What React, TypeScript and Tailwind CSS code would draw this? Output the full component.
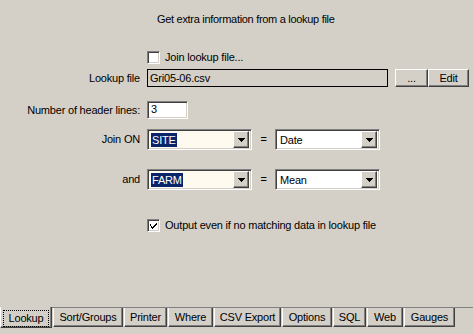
import React from "react"

const font = { fontFamily: '"Liberation Sans", Arial, sans-serif' }

const sunken =
    "border border-t-[#808080] border-l-[#808080] border-b-white border-r-white shadow-[inset_1px_1px_0_#404040,inset_-1px_-1px_0_#d4d0c8]"
const raised =
    "border border-t-white border-l-white border-b-[#404040] border-r-[#404040] shadow-[inset_-1px_-1px_0_#808080]"

const CheckBox = ({ checked }: { checked?: boolean }) => (
    <div className={`w-[13px] h-[13px] bg-white flex items-center justify-center ${sunken}`}>
        {checked && (
            <svg width="7" height="7" viewBox="0 0 7 7" shapeRendering="crispEdges">
                <path d="M0 2h1v3h1v1h1v-1h1v-1h1v-1h1v-1h1v-1h-1v1h-1v1h-1v1h-1v1h-1v-1h-1v-1h-1z" fill="#000" />
                <path d="M0 3h1v3h1v1h1v-1h1v-1h1v-1h1v-1h1v-1h-1v1h-1v1h-1v1h-1v1h-1v-1h-1v-1h-1z" fill="#000" />
            </svg>
        )}
    </div>
)

const DropArrow = () => (
    <div className={`w-[16px] h-[17px] bg-[#d4d0c8] flex items-center justify-center ${raised}`}>
        <svg width="7" height="4" viewBox="0 0 7 4" shapeRendering="crispEdges">
            <path d="M0 0h7v1h-1v1h-1v1h-1v1h-1v-1h-1v-1h-1v-1h-1z" fill="#000" />
        </svg>
    </div>
)

const Combo = ({ value, selected, bg }: { value: string; selected?: boolean; bg: string }) => (
    <div className={`w-[105px] h-[21px] flex items-center justify-between p-[2px] ${bg} ${sunken}`}>
        <span
            className={`ml-[1px] h-[14px] leading-[14px] px-[1px] ${selected ? "bg-[#0a246a] text-white" : "text-black"}`}
        >
            {value}
        </span>
        <DropArrow />
    </div>
)

const Label = ({ children }: { children: React.ReactNode }) => (
    <div className="w-[140px] text-right shrink-0">{children}</div>
)

const tabs = [
    { name: "Sort/Groups", w: "w-[70px]" },
    { name: "Printer", w: "w-[43px]" },
    { name: "Where", w: "w-[45px]" },
    { name: "CSV Export", w: "w-[67px]" },
    { name: "Options", w: "w-[50px]" },
    { name: "SQL", w: "w-[33px]" },
    { name: "Web", w: "w-[36px]" },
    { name: "Gauges", w: "w-[51px]" },
]

export default function App() {
    return (
        <div
            className="w-[473px] h-[334px] bg-[#d4d0c8] text-black text-[11px] tracking-[-0.2px] flex flex-col overflow-hidden"
            style={font}
        >
            <div className="h-[308px] flex flex-col border-b border-b-[#808080]">
                <div className="mt-[13px] h-[13px] leading-[13px] pl-[157px] tracking-[-0.3px]">
                    Get extra information from a lookup file
                </div>

                <div className="mt-[24px] h-[15px] flex items-center pl-[147px] gap-[5px]">
                    <CheckBox />
                    <span>Join lookup file...</span>
                </div>

                <div className="mt-[4px] h-[18px] flex items-center gap-[7px]">
                    <Label>Lookup file</Label>
                    <div className="w-[241px] h-[18px] border border-black leading-[16px] pl-[2px]">Gri05-06.csv</div>
                    <div className="flex">
                        <div className={`w-[33px] h-[18px] bg-[#d4d0c8] flex items-center justify-center ${raised}`}>...</div>
                        <div className={`w-[41px] h-[18px] bg-[#d4d0c8] flex items-center justify-center ${raised}`}>Edit</div>
                    </div>
                </div>

                <div className="mt-[14px] h-[18px] flex items-center gap-[7px]">
                    <Label>Number of header lines:</Label>
                    <div className={`w-[41px] h-[18px] bg-white leading-[15px] pl-[3px] ${sunken}`}>3</div>
                </div>

                <div className="mt-[10px] h-[21px] flex items-center gap-[7px]">
                    <Label>Join ON</Label>
                    <Combo value="SITE" selected bg="bg-[#fffaf0]" />
                    <span className="w-[9px] text-center">=</span>
                    <Combo value="Date" bg="bg-white" />
                </div>

                <div className="mt-[19px] h-[21px] flex items-center gap-[7px]">
                    <Label>and</Label>
                    <Combo value="FARM" selected bg="bg-[#fffaf0]" />
                    <span className="w-[9px] text-center">=</span>
                    <Combo value="Mean" bg="bg-white" />
                </div>

                <div className="mt-[28px] h-[15px] flex items-center pl-[147px] gap-[5px]">
                    <CheckBox checked />
                    <span>Output even if no matching data in lookup file</span>
                </div>
            </div>

            <div className="flex items-start gap-[1px]">
                <div className="w-[52px] h-[21px] -mt-[1px] bg-[#d4d0c8] border-l border-l-white border-r border-r-[#404040] border-b border-b-[#404040] shadow-[inset_-1px_-1px_0_#808080] flex items-center justify-center pt-[2px]">
                    <div className="border border-dotted border-black w-[46px] h-[17px] flex items-center justify-center">Lookup</div>
                </div>
                {tabs.map((t) => (
                    <div
                        key={t.name}
                        className={`${t.w} h-[19px] bg-[#d4d0c8] border-l border-l-white border-r border-r-[#404040] border-b border-b-[#404040] shadow-[inset_-1px_-1px_0_#808080] flex items-center justify-center`}
                    >
                        {t.name}
                    </div>
                ))}
            </div>
        </div>
    )
}
